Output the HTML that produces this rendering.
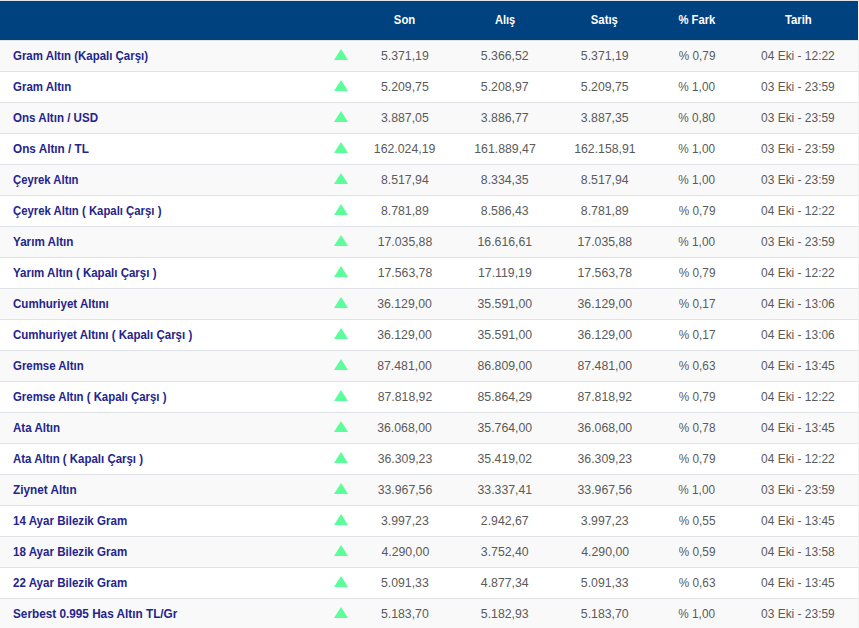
<!DOCTYPE html><html><head><meta charset="utf-8"><style>
*{margin:0;padding:0;box-sizing:border-box}
html,body{width:859px;height:628px;overflow:hidden;background:#f2f2f2;font-family:"Liberation Sans",sans-serif}
.wrap{position:absolute;left:0;top:0;width:858px}
.hd{position:absolute;left:0;top:1px;width:858px;height:39px;background:#00417f;color:#fff;font-weight:bold;font-size:13px}
.c{position:absolute;width:0;height:16px}
.c b,.c em{position:absolute;top:0;white-space:nowrap;line-height:16px;display:inline-block;transform-origin:0 0;font-style:normal}
.hd .c{top:11px}
.hd b{left:0;color:#fff}
.r{position:absolute;left:0;width:858px;height:31px;border-bottom:1px solid #dfe2e6}
.r.o{background:#f9f9f9}
.r.e{background:#fff}
.r .c{top:7px}
.n{left:13px}
.n b{left:0;color:#24248c;font-weight:bold;font-size:13px}
.v em{left:0;color:#5a5a5a;font-size:13px}
.t{position:absolute;left:334px;top:8px;width:0;height:0;border-left:7px solid transparent;border-right:7px solid transparent;border-bottom:11px solid #5cfd9b}
</style></head><body><div class="wrap">
<div style="position:absolute;left:0;top:0;width:859px;height:1px;background:#dee2e6;z-index:2"></div>
<div style="position:absolute;left:0;top:40px;width:858px;height:1px;background:#dfe2e6"></div>
<div class="hd">
<div class="c" style="left:404.70px"><b style="transform:translateX(-11.162px) scaleX(0.8750)">Son</b></div>
<div class="c" style="left:505.10px"><b style="transform:translateX(-10.115px) scaleX(0.8542)">Alış</b></div>
<div class="c" style="left:605.40px"><b style="transform:translateX(-14.223px) scaleX(0.8710)">Satış</b></div>
<div class="c" style="left:697.00px"><b style="transform:translateX(-18.600px) scaleX(0.8651)">% Fark</b></div>
<div class="c" style="left:797.50px"><b style="transform:translateX(-13.065px) scaleX(0.8710)">Tarih</b></div>
</div>
<div class="r o" style="top:41px"><div class="c n"><b style="transform:translateX(0.000px) scaleX(0.8804)">Gram Altın (Kapalı Çarşı)</b></div><i class="t"></i>
<div class="c v" style="left:404.70px"><em style="transform:translateX(-24.058px) scaleX(0.9450)">5.371,19</em></div>
<div class="c v" style="left:505.10px"><em style="transform:translateX(-24.153px) scaleX(0.9450)">5.366,52</em></div>
<div class="c v" style="left:605.40px"><em style="transform:translateX(-24.192px) scaleX(0.9450)">5.371,19</em></div>
<div class="c v" style="left:697.00px"><em style="transform:translateX(-18.200px) scaleX(0.9050)">% 0,79</em></div>
<div class="c v" style="left:797.50px"><em style="transform:translateX(-36.920px) scaleX(0.9180)">04 Eki - 12:22</em></div>
</div>
<div class="r e" style="top:72px"><div class="c n"><b style="transform:translateX(0.000px) scaleX(0.8833)">Gram Altın</b></div><i class="t"></i>
<div class="c v" style="left:404.70px"><em style="transform:translateX(-24.058px) scaleX(0.9450)">5.209,75</em></div>
<div class="c v" style="left:505.10px"><em style="transform:translateX(-24.153px) scaleX(0.9450)">5.208,97</em></div>
<div class="c v" style="left:605.40px"><em style="transform:translateX(-24.192px) scaleX(0.9450)">5.209,75</em></div>
<div class="c v" style="left:697.00px"><em style="transform:translateX(-18.653px) scaleX(0.9050)">% 1,00</em></div>
<div class="c v" style="left:797.50px"><em style="transform:translateX(-36.920px) scaleX(0.9180)">03 Eki - 23:59</em></div>
</div>
<div class="r o" style="top:103px"><div class="c n"><b style="transform:translateX(0.000px) scaleX(0.8896)">Ons Altın / USD</b></div><i class="t"></i>
<div class="c v" style="left:404.70px"><em style="transform:translateX(-24.058px) scaleX(0.9450)">3.887,05</em></div>
<div class="c v" style="left:505.10px"><em style="transform:translateX(-24.153px) scaleX(0.9450)">3.886,77</em></div>
<div class="c v" style="left:605.40px"><em style="transform:translateX(-24.192px) scaleX(0.9450)">3.887,35</em></div>
<div class="c v" style="left:697.00px"><em style="transform:translateX(-18.653px) scaleX(0.9050)">% 0,80</em></div>
<div class="c v" style="left:797.50px"><em style="transform:translateX(-36.920px) scaleX(0.9180)">03 Eki - 23:59</em></div>
</div>
<div class="r e" style="top:134px"><div class="c n"><b style="transform:translateX(0.000px) scaleX(0.9036)">Ons Altın / TL</b></div><i class="t"></i>
<div class="c v" style="left:404.70px"><em style="transform:translateX(-31.146px) scaleX(0.9450)">162.024,19</em></div>
<div class="c v" style="left:505.10px"><em style="transform:translateX(-30.768px) scaleX(0.9450)">161.889,47</em></div>
<div class="c v" style="left:605.40px"><em style="transform:translateX(-30.807px) scaleX(0.9450)">162.158,91</em></div>
<div class="c v" style="left:697.00px"><em style="transform:translateX(-18.653px) scaleX(0.9050)">% 1,00</em></div>
<div class="c v" style="left:797.50px"><em style="transform:translateX(-36.920px) scaleX(0.9180)">03 Eki - 23:59</em></div>
</div>
<div class="r o" style="top:165px"><div class="c n"><b style="transform:translateX(0.000px) scaleX(0.8680)">Çeyrek Altın</b></div><i class="t"></i>
<div class="c v" style="left:404.70px"><em style="transform:translateX(-24.058px) scaleX(0.9450)">8.517,94</em></div>
<div class="c v" style="left:505.10px"><em style="transform:translateX(-24.153px) scaleX(0.9450)">8.334,35</em></div>
<div class="c v" style="left:605.40px"><em style="transform:translateX(-24.192px) scaleX(0.9450)">8.517,94</em></div>
<div class="c v" style="left:697.00px"><em style="transform:translateX(-18.653px) scaleX(0.9050)">% 1,00</em></div>
<div class="c v" style="left:797.50px"><em style="transform:translateX(-36.920px) scaleX(0.9180)">03 Eki - 23:59</em></div>
</div>
<div class="r e" style="top:196px"><div class="c n"><b style="transform:translateX(0.000px) scaleX(0.8729)">Çeyrek Altın ( Kapalı Çarşı )</b></div><i class="t"></i>
<div class="c v" style="left:404.70px"><em style="transform:translateX(-24.058px) scaleX(0.9450)">8.781,89</em></div>
<div class="c v" style="left:505.10px"><em style="transform:translateX(-24.153px) scaleX(0.9450)">8.586,43</em></div>
<div class="c v" style="left:605.40px"><em style="transform:translateX(-24.192px) scaleX(0.9450)">8.781,89</em></div>
<div class="c v" style="left:697.00px"><em style="transform:translateX(-18.200px) scaleX(0.9050)">% 0,79</em></div>
<div class="c v" style="left:797.50px"><em style="transform:translateX(-36.920px) scaleX(0.9180)">04 Eki - 12:22</em></div>
</div>
<div class="r o" style="top:227px"><div class="c n"><b style="transform:translateX(0.000px) scaleX(0.8970)">Yarım Altın</b></div><i class="t"></i>
<div class="c v" style="left:404.70px"><em style="transform:translateX(-27.366px) scaleX(0.9450)">17.035,88</em></div>
<div class="c v" style="left:505.10px"><em style="transform:translateX(-27.460px) scaleX(0.9450)">16.616,61</em></div>
<div class="c v" style="left:605.40px"><em style="transform:translateX(-27.500px) scaleX(0.9450)">17.035,88</em></div>
<div class="c v" style="left:697.00px"><em style="transform:translateX(-18.653px) scaleX(0.9050)">% 1,00</em></div>
<div class="c v" style="left:797.50px"><em style="transform:translateX(-36.920px) scaleX(0.9180)">03 Eki - 23:59</em></div>
</div>
<div class="r e" style="top:258px"><div class="c n"><b style="transform:translateX(0.000px) scaleX(0.8852)">Yarım Altın ( Kapalı Çarşı )</b></div><i class="t"></i>
<div class="c v" style="left:404.70px"><em style="transform:translateX(-27.366px) scaleX(0.9450)">17.563,78</em></div>
<div class="c v" style="left:505.10px"><em style="transform:translateX(-26.988px) scaleX(0.9450)">17.119,19</em></div>
<div class="c v" style="left:605.40px"><em style="transform:translateX(-27.500px) scaleX(0.9450)">17.563,78</em></div>
<div class="c v" style="left:697.00px"><em style="transform:translateX(-18.200px) scaleX(0.9050)">% 0,79</em></div>
<div class="c v" style="left:797.50px"><em style="transform:translateX(-36.920px) scaleX(0.9180)">04 Eki - 12:22</em></div>
</div>
<div class="r o" style="top:289px"><div class="c n"><b style="transform:translateX(0.000px) scaleX(0.8880)">Cumhuriyet Altını</b></div><i class="t"></i>
<div class="c v" style="left:404.70px"><em style="transform:translateX(-27.838px) scaleX(0.9450)">36.129,00</em></div>
<div class="c v" style="left:505.10px"><em style="transform:translateX(-27.460px) scaleX(0.9450)">35.591,00</em></div>
<div class="c v" style="left:605.40px"><em style="transform:translateX(-27.500px) scaleX(0.9450)">36.129,00</em></div>
<div class="c v" style="left:697.00px"><em style="transform:translateX(-18.200px) scaleX(0.9050)">% 0,17</em></div>
<div class="c v" style="left:797.50px"><em style="transform:translateX(-36.920px) scaleX(0.9180)">04 Eki - 13:06</em></div>
</div>
<div class="r e" style="top:320px"><div class="c n"><b style="transform:translateX(0.000px) scaleX(0.8852)">Cumhuriyet Altını ( Kapalı Çarşı )</b></div><i class="t"></i>
<div class="c v" style="left:404.70px"><em style="transform:translateX(-27.838px) scaleX(0.9450)">36.129,00</em></div>
<div class="c v" style="left:505.10px"><em style="transform:translateX(-27.460px) scaleX(0.9450)">35.591,00</em></div>
<div class="c v" style="left:605.40px"><em style="transform:translateX(-27.500px) scaleX(0.9450)">36.129,00</em></div>
<div class="c v" style="left:697.00px"><em style="transform:translateX(-18.200px) scaleX(0.9050)">% 0,17</em></div>
<div class="c v" style="left:797.50px"><em style="transform:translateX(-36.920px) scaleX(0.9180)">04 Eki - 13:06</em></div>
</div>
<div class="r o" style="top:351px"><div class="c n"><b style="transform:translateX(0.000px) scaleX(0.8787)">Gremse Altın</b></div><i class="t"></i>
<div class="c v" style="left:404.70px"><em style="transform:translateX(-27.838px) scaleX(0.9450)">87.481,00</em></div>
<div class="c v" style="left:505.10px"><em style="transform:translateX(-27.460px) scaleX(0.9450)">86.809,00</em></div>
<div class="c v" style="left:605.40px"><em style="transform:translateX(-27.500px) scaleX(0.9450)">87.481,00</em></div>
<div class="c v" style="left:697.00px"><em style="transform:translateX(-18.200px) scaleX(0.9050)">% 0,63</em></div>
<div class="c v" style="left:797.50px"><em style="transform:translateX(-36.920px) scaleX(0.9180)">04 Eki - 13:45</em></div>
</div>
<div class="r e" style="top:382px"><div class="c n"><b style="transform:translateX(0.000px) scaleX(0.8766)">Gremse Altın ( Kapalı Çarşı )</b></div><i class="t"></i>
<div class="c v" style="left:404.70px"><em style="transform:translateX(-27.366px) scaleX(0.9450)">87.818,92</em></div>
<div class="c v" style="left:505.10px"><em style="transform:translateX(-27.460px) scaleX(0.9450)">85.864,29</em></div>
<div class="c v" style="left:605.40px"><em style="transform:translateX(-27.500px) scaleX(0.9450)">87.818,92</em></div>
<div class="c v" style="left:697.00px"><em style="transform:translateX(-18.200px) scaleX(0.9050)">% 0,79</em></div>
<div class="c v" style="left:797.50px"><em style="transform:translateX(-36.920px) scaleX(0.9180)">04 Eki - 12:22</em></div>
</div>
<div class="r o" style="top:413px"><div class="c n"><b style="transform:translateX(0.000px) scaleX(0.8887)">Ata Altın</b></div><i class="t"></i>
<div class="c v" style="left:404.70px"><em style="transform:translateX(-27.838px) scaleX(0.9450)">36.068,00</em></div>
<div class="c v" style="left:505.10px"><em style="transform:translateX(-27.460px) scaleX(0.9450)">35.764,00</em></div>
<div class="c v" style="left:605.40px"><em style="transform:translateX(-27.500px) scaleX(0.9450)">36.068,00</em></div>
<div class="c v" style="left:697.00px"><em style="transform:translateX(-18.200px) scaleX(0.9050)">% 0,78</em></div>
<div class="c v" style="left:797.50px"><em style="transform:translateX(-36.920px) scaleX(0.9180)">04 Eki - 13:45</em></div>
</div>
<div class="r e" style="top:444px"><div class="c n"><b style="transform:translateX(0.000px) scaleX(0.8811)">Ata Altın ( Kapalı Çarşı )</b></div><i class="t"></i>
<div class="c v" style="left:404.70px"><em style="transform:translateX(-27.366px) scaleX(0.9450)">36.309,23</em></div>
<div class="c v" style="left:505.10px"><em style="transform:translateX(-27.460px) scaleX(0.9450)">35.419,02</em></div>
<div class="c v" style="left:605.40px"><em style="transform:translateX(-27.500px) scaleX(0.9450)">36.309,23</em></div>
<div class="c v" style="left:697.00px"><em style="transform:translateX(-18.200px) scaleX(0.9050)">% 0,79</em></div>
<div class="c v" style="left:797.50px"><em style="transform:translateX(-36.920px) scaleX(0.9180)">04 Eki - 12:22</em></div>
</div>
<div class="r o" style="top:475px"><div class="c n"><b style="transform:translateX(0.000px) scaleX(0.9043)">Ziynet Altın</b></div><i class="t"></i>
<div class="c v" style="left:404.70px"><em style="transform:translateX(-27.366px) scaleX(0.9450)">33.967,56</em></div>
<div class="c v" style="left:505.10px"><em style="transform:translateX(-27.460px) scaleX(0.9450)">33.337,41</em></div>
<div class="c v" style="left:605.40px"><em style="transform:translateX(-27.500px) scaleX(0.9450)">33.967,56</em></div>
<div class="c v" style="left:697.00px"><em style="transform:translateX(-18.653px) scaleX(0.9050)">% 1,00</em></div>
<div class="c v" style="left:797.50px"><em style="transform:translateX(-36.920px) scaleX(0.9180)">03 Eki - 23:59</em></div>
</div>
<div class="r e" style="top:506px"><div class="c n"><b style="transform:translateX(0.000px) scaleX(0.8898)">14 Ayar Bilezik Gram</b></div><i class="t"></i>
<div class="c v" style="left:404.70px"><em style="transform:translateX(-24.058px) scaleX(0.9450)">3.997,23</em></div>
<div class="c v" style="left:505.10px"><em style="transform:translateX(-24.153px) scaleX(0.9450)">2.942,67</em></div>
<div class="c v" style="left:605.40px"><em style="transform:translateX(-24.192px) scaleX(0.9450)">3.997,23</em></div>
<div class="c v" style="left:697.00px"><em style="transform:translateX(-18.200px) scaleX(0.9050)">% 0,55</em></div>
<div class="c v" style="left:797.50px"><em style="transform:translateX(-36.920px) scaleX(0.9180)">04 Eki - 13:45</em></div>
</div>
<div class="r o" style="top:537px"><div class="c n"><b style="transform:translateX(0.000px) scaleX(0.8898)">18 Ayar Bilezik Gram</b></div><i class="t"></i>
<div class="c v" style="left:404.70px"><em style="transform:translateX(-23.586px) scaleX(0.9450)">4.290,00</em></div>
<div class="c v" style="left:505.10px"><em style="transform:translateX(-24.153px) scaleX(0.9450)">3.752,40</em></div>
<div class="c v" style="left:605.40px"><em style="transform:translateX(-23.719px) scaleX(0.9450)">4.290,00</em></div>
<div class="c v" style="left:697.00px"><em style="transform:translateX(-18.200px) scaleX(0.9050)">% 0,59</em></div>
<div class="c v" style="left:797.50px"><em style="transform:translateX(-36.920px) scaleX(0.9180)">04 Eki - 13:58</em></div>
</div>
<div class="r e" style="top:568px"><div class="c n"><b style="transform:translateX(0.000px) scaleX(0.8898)">22 Ayar Bilezik Gram</b></div><i class="t"></i>
<div class="c v" style="left:404.70px"><em style="transform:translateX(-24.058px) scaleX(0.9450)">5.091,33</em></div>
<div class="c v" style="left:505.10px"><em style="transform:translateX(-24.153px) scaleX(0.9450)">4.877,34</em></div>
<div class="c v" style="left:605.40px"><em style="transform:translateX(-24.192px) scaleX(0.9450)">5.091,33</em></div>
<div class="c v" style="left:697.00px"><em style="transform:translateX(-18.200px) scaleX(0.9050)">% 0,63</em></div>
<div class="c v" style="left:797.50px"><em style="transform:translateX(-36.920px) scaleX(0.9180)">04 Eki - 13:45</em></div>
</div>
<div class="r o" style="top:599px"><div class="c n"><b style="transform:translateX(0.000px) scaleX(0.9049)">Serbest 0.995 Has Altın TL/Gr</b></div><i class="t"></i>
<div class="c v" style="left:404.70px"><em style="transform:translateX(-24.058px) scaleX(0.9450)">5.183,70</em></div>
<div class="c v" style="left:505.10px"><em style="transform:translateX(-24.153px) scaleX(0.9450)">5.182,93</em></div>
<div class="c v" style="left:605.40px"><em style="transform:translateX(-24.192px) scaleX(0.9450)">5.183,70</em></div>
<div class="c v" style="left:697.00px"><em style="transform:translateX(-18.653px) scaleX(0.9050)">% 1,00</em></div>
<div class="c v" style="left:797.50px"><em style="transform:translateX(-36.920px) scaleX(0.9180)">03 Eki - 23:59</em></div>
</div>
</div></body></html>
